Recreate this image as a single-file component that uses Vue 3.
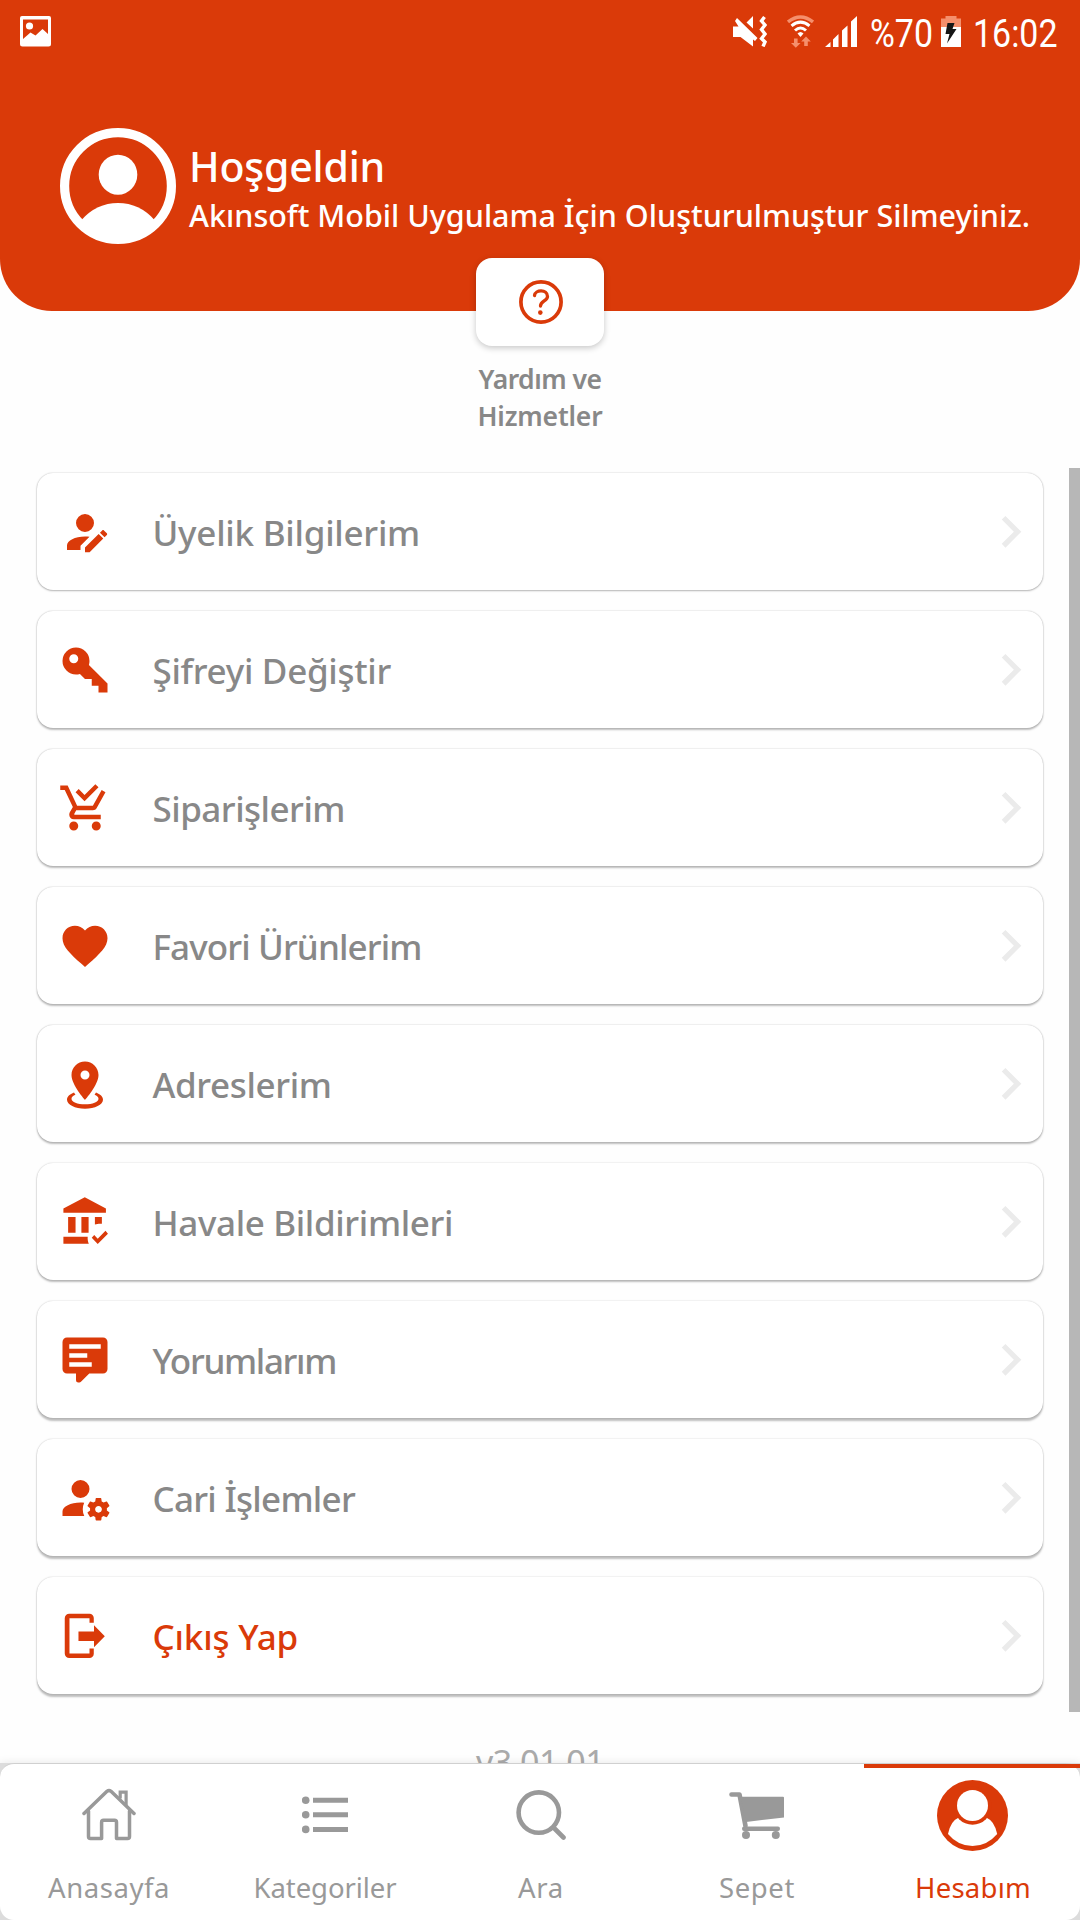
<script setup>
const items = [
  { label: 'Üyelik Bilgilerim', width: 267.5, icon: 'M21.7,13.35L20.7,14.35L18.65,12.3L19.65,11.3C19.86,11.09 20.21,11.09 20.42,11.3L21.7,12.58C21.91,12.79 21.91,13.14 21.7,13.35M12,18.94L18.06,12.88L20.11,14.93L14.06,21H12V18.94M12,14C7.58,14 4,15.79 4,18V20H10V18.11L14,14.11C13.34,14.03 12.67,14 12,14M12,4A4,4 0 0,0 8,8A4,4 0 0,0 12,12A4,4 0 0,0 16,8A4,4 0 0,0 12,4Z' },
  { label: 'Şifreyi Değiştir', width: 238.5, icon: 'M22,18V22H18V19H15V16H12L9.74,13.74C9.19,13.91 8.61,14 8,14A6,6 0 0,1 2,8A6,6 0 0,1 8,2A6,6 0 0,1 14,8C14,8.61 13.91,9.19 13.74,9.74L22,18M7,5A2,2 0 0,0 5,7A2,2 0 0,0 7,9A2,2 0 0,0 9,7A2,2 0 0,0 7,5Z' },
  { label: 'Siparişlerim', width: 192.5, icon: 'M9 20C9 21.1 8.1 22 7 22S5 21.1 5 20 5.9 18 7 18 9 18.9 9 20M17 18C15.9 18 15 18.9 15 20S15.9 22 17 22 19 21.1 19 20 18.1 18 17 18M7.2 14.8V14.7L8.1 13H15.5C16.2 13 16.9 12.6 17.2 12L21.1 5L19.4 4L15.5 11H8.5L4.3 2H1V4H3L6.6 11.6L5.2 14C5.1 14.3 5 14.6 5 15C5 16.1 5.9 17 7 17H19V15H7.4C7.3 15 7.2 14.9 7.2 14.8M18 2.8L16.6 1.4L11.8 6.2L9.2 3.6L7.8 5L11.8 9L18 2.8Z' },
  { label: 'Favori Ürünlerim', width: 269, icon: 'M12,21.35L10.55,20.03C5.4,15.36 2,12.27 2,8.5C2,5.41 4.42,3 7.5,3C9.24,3 10.91,3.81 12,5.08C13.09,3.81 14.76,3 16.5,3C19.58,3 22,5.41 22,8.5C22,12.27 18.6,15.36 13.45,20.03L12,21.35Z' },
  { label: 'Adreslerim', width: 179, icon: 'M12,2C15.31,2 18,4.66 18,7.95C18,12.41 12,19 12,19C12,19 6,12.41 6,7.95C6,4.66 8.69,2 12,2M12,6A2,2 0 0,0 10,8A2,2 0 0,0 12,10A2,2 0 0,0 14,8A2,2 0 0,0 12,6M20,19C20,21.21 16.42,23 12,23C7.58,23 4,21.21 4,19C4,17.71 5.22,16.56 7.11,15.83L7.75,16.74C6.67,17.19 6,17.81 6,18.5C6,19.88 8.69,21 12,21C15.31,21 18,19.88 18,18.5C18,17.81 17.33,17.19 16.25,16.74L16.89,15.83C18.78,16.56 20,17.71 20,19Z' },
  { label: 'Havale Bildirimleri', width: 300.5, icon: 'M11.9,1L2.4,6V7.9H21.3V6M4.5,9.8V16.8H7.8V9.8M10.4,9.8V16.8H13.6V9.8M16.4,9.8V13.1C17.3,12.9 18.2,12.7 19.5,12.8V9.8M2.4,18.6V21.7H13.7C13.3,20.8 13.1,19.8 13.2,18.6M17.65,21.8L15,19L16.1,17.8L17.65,19.4L21.1,15.9L22.2,17.2Z' },
  { label: 'Yorumlarım', width: 183.5, icon: 'M9,22A1,1 0 0,1 8,21V18H4A2,2 0 0,1 2,16V4C2,2.89 2.9,2 4,2H20A2,2 0 0,1 22,4V16A2,2 0 0,1 20,18H13.9L10.2,21.71C10,21.9 9.75,22 9.5,22V22H9M5,5V7H19V5H5M5,9V11H13V9H5M5,13V15H15V13H5Z' },
  { label: 'Cari İşlemler', width: 202.5, icon: 'M10 4A4 4 0 0 0 6 8A4 4 0 0 0 10 12A4 4 0 0 0 14 8A4 4 0 0 0 10 4M17 12C16.87 12 16.76 12.09 16.74 12.21L16.55 13.53C16.25 13.66 15.96 13.82 15.7 14L14.46 13.5C14.35 13.5 14.22 13.5 14.15 13.63L13.15 15.36C13.09 15.47 13.11 15.6 13.21 15.68L14.27 16.5C14.25 16.67 14.24 16.83 14.24 17C14.24 17.17 14.25 17.33 14.27 17.5L13.21 18.32C13.12 18.4 13.09 18.53 13.15 18.64L14.15 20.37C14.21 20.5 14.34 20.5 14.46 20.5L15.7 20C15.96 20.18 16.24 20.35 16.55 20.47L16.74 21.79C16.76 21.91 16.86 22 17 22H19C19.11 22 19.22 21.91 19.24 21.79L19.43 20.47C19.73 20.34 20 20.18 20.27 20L21.5 20.5C21.63 20.5 21.76 20.5 21.83 20.37L22.83 18.64C22.89 18.53 22.86 18.4 22.77 18.32L21.7 17.5C21.72 17.33 21.74 17.17 21.74 17C21.74 16.83 21.73 16.67 21.7 16.5L22.76 15.68C22.85 15.6 22.88 15.47 22.82 15.36L21.82 13.63C21.76 13.5 21.63 13.5 21.5 13.5L20.27 14C20 13.82 19.73 13.65 19.42 13.53L19.23 12.21C19.22 12.09 19.11 12 19 12H17M10 14C5.58 14 2 15.79 2 18V20H11.68A7 7 0 0 1 11 17A7 7 0 0 1 11.64 14.09C11.11 14.03 10.56 14 10 14M18 15.5C18.83 15.5 19.5 16.17 19.5 17C19.5 17.83 18.83 18.5 18 18.5C17.16 18.5 16.5 17.83 16.5 17C16.5 16.17 17.17 15.5 18 15.5Z' },
  { label: 'Çıkış Yap', width: 145.5, danger: true, icon: 'M5,2.1H14A1.9,1.9 0 0,1 15.9,4V6.1H14V4.1H5.1V19.8H14V17.5H15.9V19.9A1.9,1.9 0 0,1 14,21.8H5A2,2 0 0,1 3,19.8V4.1A2,2 0 0,1 5,2.1M9.1,10H16V7.2L20.8,12.1L16,17V14.2H9.1Z' },
]

// Spreads a line of text evenly over the given width.
const vFit = (el, { value }) => {
  el.style.letterSpacing = '0px'
  const natural = el.getBoundingClientRect().width
  el.style.letterSpacing = `${(value - natural) / el.textContent.length}px`
}
</script>

<template>
  <div class="screen">
    <header class="header">
      <div class="status">
        <svg class="s-img" width="31" height="31" viewBox="0 0 31 31">
          <path fill="#fff" fill-rule="evenodd" d="M2 0H29a2 2 0 0 1 2 2V28a2.500 2.500 0 0 1-2.500 2.500H2.500A2.500 2.500 0 0 1 0 28V2a2 2 0 0 1 2-2zM3 3.500V23L10.500 16.500L15.500 19.500L22.500 13L28 18V3.500z" />
          <circle cx="9.500" cy="10" r="3.600" fill="#fff" />
        </svg>
        <svg class="s-mute" width="34" height="31" viewBox="0 0 34 31">
          <path fill="#fff" d="M0 10.500H5.500L2 5L4 2L24.500 22L22 25L20 23.500V30.500L7.500 21H0zM13.500 6.500L20 0V12.500z" />
          <path fill="none" stroke="#fff" stroke-width="3.400" d="M31.500 1L28.500 5L32 9L28.500 13.500L32 18L28.500 22.500L32 26L30 30.500" />
        </svg>
        <svg class="s-wifi" width="27" height="33" viewBox="0 0 27 33">
          <path d="M1 7Q13.500-3 26 7" fill="none" stroke="#f58f6c" stroke-width="3.500" />
          <path d="M4.500 10.800Q13.500 3.500 22.500 10.800M8 15.500Q13.500 10.500 19 15.500" fill="none" stroke="#fff" stroke-width="3" />
          <path d="M10.500 18.500Q13.500 15.500 16.500 18.500L13.500 22z" fill="#fff" />
          <path d="M7 23.500h3.600V28h3L8.800 32.800L4 28h3zM17.200 31h3.600V26.500h3L19 21.500L14.200 26.500h3z" fill="#f58f6c" />
        </svg>
        <svg class="s-signal" width="32" height="31" viewBox="0 0 32 31" fill="#fff">
          <path d="M0 31L5.500 26V31zM8 31V23.500L13.500 18V31zM17 31V14.500L22.500 9.500V31zM26 31V5.500L32 0V31z" />
        </svg>
        <span class="s-text s-pct">%70</span>
        <svg class="s-batt" width="20" height="31" viewBox="0 0 20 31">
          <path d="M4.500 0H15.500V2.500H20V12H0V2.500H4.500z" fill="#f58f6c" />
          <path d="M0 11H20V31H0z" fill="#fff" />
          <path d="M6.500 7H13.500L11.500 13H15.500L6 27.500L8.500 18H4.500z" fill="#161616" />
        </svg>
        <span class="s-text s-time">16:02</span>
      </div>
      <div class="profile">
        <svg width="116" height="116" viewBox="0 0 116 116">
          <circle cx="58" cy="58" r="53.400" fill="none" stroke="#fff" stroke-width="9.200" />
          <ellipse cx="58" cy="46.700" rx="19.300" ry="20" fill="#fff" />
          <path fill="#fff" d="M21.500 92Q36.500 75 58 75Q79.500 75 94.500 92Q79 111 58 111Q37 111 21.500 92z" />
        </svg>
        <div class="who">
          <div class="hello"><span v-fit="196">Hoşgeldin</span></div>
          <div class="name"><span v-fit="841">Akınsoft Mobil Uygulama İçin Oluşturulmuştur Silmeyiniz.</span></div>
        </div>
      </div>
    </header>

    <section class="help">
      <div class="help-card">
        <svg width="44" height="44" viewBox="0 0 44 44" fill="none" stroke="#da3a09" stroke-linecap="round">
          <circle cx="22" cy="22" r="20.100" stroke-width="3.700" />
          <path d="M15.500 15.500C16 9.500 28.500 9 28.500 16.500C28.500 21 21.500 21 21.500 26" stroke-width="3.300" />
          <circle cx="21.300" cy="32.600" r="2.300" fill="#da3a09" stroke="none" />
        </svg>
      </div>
      <div class="help-text"><span v-fit="123">Yardım ve</span></div>
      <div class="help-text"><span v-fit="125">Hizmetler</span></div>
    </section>

    <main class="list">
      <div
        v-for="(item, i) in items"
        :key="item.label"
        class="card"
        :class="{ danger: item.danger }"
        :style="{ '--drop': 1 + i * 0.2 + 'px' }"
      >
        <svg class="icon" viewBox="0 0 24 24"><path :d="item.icon" fill="#da3a09" fill-rule="evenodd" /></svg>
        <span class="label"><span v-fit="item.width">{{ item.label }}</span></span>
        <svg class="chev" viewBox="0 0 24 24"><path d="M8.590 16.580L13.170 12L8.590 7.410L10 6L16 12L10 18Z" fill="#ebebeb" /></svg>
      </div>
      <div class="version"><span v-fit="128">v3.01.01</span></div>
      <div class="scrollbar"></div>
    </main>

    <div class="nav-wrap">
      <nav class="nav">
        <div class="tab">
          <div class="glyph">
            <svg width="54" height="54" viewBox="0 0 54 54" fill="none" stroke="#999" stroke-width="3.500" stroke-linecap="round" stroke-linejoin="round">
              <path d="M2 25.500L25 3.300Q27 1.600 29 3.300L52 25.500" />
              <path d="M6.500 23V48.500Q6.500 50.500 8.500 50.500H19.600V34.200Q19.600 32.200 21.600 32.200H32.500Q34.500 32.200 34.500 34.200V50.500H45.500Q47.500 50.500 47.500 48.500V23" />
              <path d="M38.200 10.500V4.100H44.100V17" stroke-width="3.200" stroke-linejoin="miter" stroke-linecap="butt" />
            </svg>
          </div>
          <div class="tab-label"><span v-fit="122">Anasayfa</span></div>
        </div>
        <div class="tab">
          <div class="glyph">
            <svg width="46" height="38" viewBox="0 0 46 38" fill="#999">
              <circle cx="3.700" cy="4.200" r="3.800" /><circle cx="3.700" cy="18.700" r="3.800" /><circle cx="3.700" cy="33.400" r="3.800" />
              <path d="M11 1.700H46V6.700H11zM11 16.200H46V21.200H11zM11 31H46V36H11z" />
            </svg>
          </div>
          <div class="tab-label"><span v-fit="143">Kategoriler</span></div>
        </div>
        <div class="tab">
          <div class="glyph">
            <svg width="50" height="50" viewBox="0 0 50 50" fill="none" stroke="#999" stroke-width="4.600" stroke-linecap="round">
              <circle cx="22.800" cy="22.600" r="20.200" /><path d="M38 38L47.500 47.500" />
            </svg>
          </div>
          <div class="tab-label"><span v-fit="46">Ara</span></div>
        </div>
        <div class="tab">
          <div class="glyph">
            <svg width="55" height="47" viewBox="0 0 55 47" fill="#999">
              <path d="M2.500 2.500H10.500L16.500 34" fill="none" stroke="#999" stroke-width="4.600" stroke-linecap="round" stroke-linejoin="round" />
              <path d="M11.500 4.700H54Q55 4.700 55 5.700V25.400L17 30zM15 34.500H49Q51 34.500 51 36.700Q51 38.900 49 38.900H15Q13 38.900 13 36.700Q13 34.500 15 34.500z" />
              <circle cx="17" cy="43" r="4" /><circle cx="46.800" cy="43" r="4" />
            </svg>
          </div>
          <div class="tab-label"><span v-fit="76">Sepet</span></div>
        </div>
        <div class="tab active">
          <div class="glyph">
            <svg width="71" height="71" viewBox="0 0 71 71">
              <circle cx="35.500" cy="35.500" r="35.500" fill="#da3a09" />
              <path fill="#fff" d="M21.400 37.700Q13.500 41 11 54Q21 66 35.500 66Q50 66 60.200 54Q57.500 41 49.600 37.700z" />
              <circle cx="35.500" cy="25.700" r="19" fill="#da3a09" />
              <circle cx="35.500" cy="25.500" r="15.500" fill="#fff" />
            </svg>
          </div>
          <div class="tab-label"><span v-fit="116">Hesabım</span></div>
        </div>
      </nav>
    </div>
  </div>
</template>

<style>
body { background: #fefefe; }
</style>

<style scoped>
* { box-sizing: border-box; }
svg { display: block; flex: none; }
.screen {
  width: 1080px;
  height: 1920px;
  display: flex;
  flex-direction: column;
  overflow: hidden;
  background: #fefefe;
  font-family: "Noto Sans", sans-serif;
  white-space: nowrap;
}
.header {
  flex: none;
  height: 311px;
  background: #da3a09;
  border-radius: 0 0 52px 52px;
  color: #fff;
}
.status { display: flex; align-items: flex-start; height: 127.500px; padding: 16px 0 0 20px; }
.s-mute { margin-left: 682px; }
.s-wifi { margin: -1px 0 0 20px; }
.s-signal { margin-left: 11px; }
.s-text {
  font: 400 39px/46px Roboto, sans-serif;
  transform-origin: 0 0;
  transform: scaleX(.87);
  margin-top: -5px;
}
.s-pct { width: 70px; margin-left: 13px; }
.s-batt { margin-left: 1px; }
.s-time { margin-left: 12px; }
.profile { display: flex; padding-left: 60px; }
.who { padding: 10.500px 0 0 13px; }
.hello { font-size: 41px; line-height: 56px; font-weight: 500; }
.name { font-size: 30.500px; line-height: 42px; font-weight: 500; }
.help {
  flex: none;
  height: 210px;
  margin-top: -53px;
  display: flex;
  flex-direction: column;
  align-items: center;
}
.help-card {
  width: 128px;
  height: 88px;
  margin-bottom: 15px;
  border-radius: 16px;
  background: #fff;
  display: flex;
  align-items: center;
  justify-content: center;
  padding-left: 1px;
  box-shadow: 0 2px 6px rgba(0, 0, 0, .22);
}
.help-text { font-size: 26.500px; font-weight: 600; line-height: 37px; color: #888; }
.list {
  position: relative;
  flex: 1;
  min-height: 0;
  overflow: hidden;
  padding: 5px 37px 0;
  display: flex;
  flex-direction: column;
  gap: 21px;
}
.card {
  flex: none;
  height: 117px;
  display: flex;
  align-items: center;
  padding-left: 20.500px;
  border-radius: 16px;
  background: #fff;
  box-shadow: 0 0 1.500px rgba(0, 0, 0, .25), 0 var(--drop) 2px rgba(0, 0, 0, .25);
}
.icon { width: 54px; height: 54px; }
.label {
  flex: 1;
  margin-left: 41px;
  padding-top: 3px;
  font-size: 35px;
  font-weight: 500;
  line-height: 48px;
  color: #888;
}
.danger .label { color: #da3a09; }
.chev { width: 63.500px; height: 63.500px; margin-right: 1px; }
.version { margin-top: 26px; text-align: center; font-size: 34px; line-height: 42px; color: #aaa; }
.scrollbar { position: absolute; top: 0; right: 0; width: 11px; height: 1244px; background: #b7b7b7; }
.nav-wrap { flex: none; height: 157px; background: #dcdcdc; box-shadow: 0 -1px 8px rgba(0, 0, 0, .08); position: relative; }
.nav { height: 157px; display: flex; background: #fff; border-radius: 14px; border-top: 1px solid #d0d0d0; }
.tab { width: 216px; display: flex; flex-direction: column; align-items: center; color: #999; }
.active { color: #da3a09; box-shadow: inset 0 4px #da3a09; }
.glyph { height: 102px; display: flex; align-items: center; padding-left: 1px; }
.tab-label { font-size: 27.500px; line-height: 44px; padding-left: 2px; }
</style>
